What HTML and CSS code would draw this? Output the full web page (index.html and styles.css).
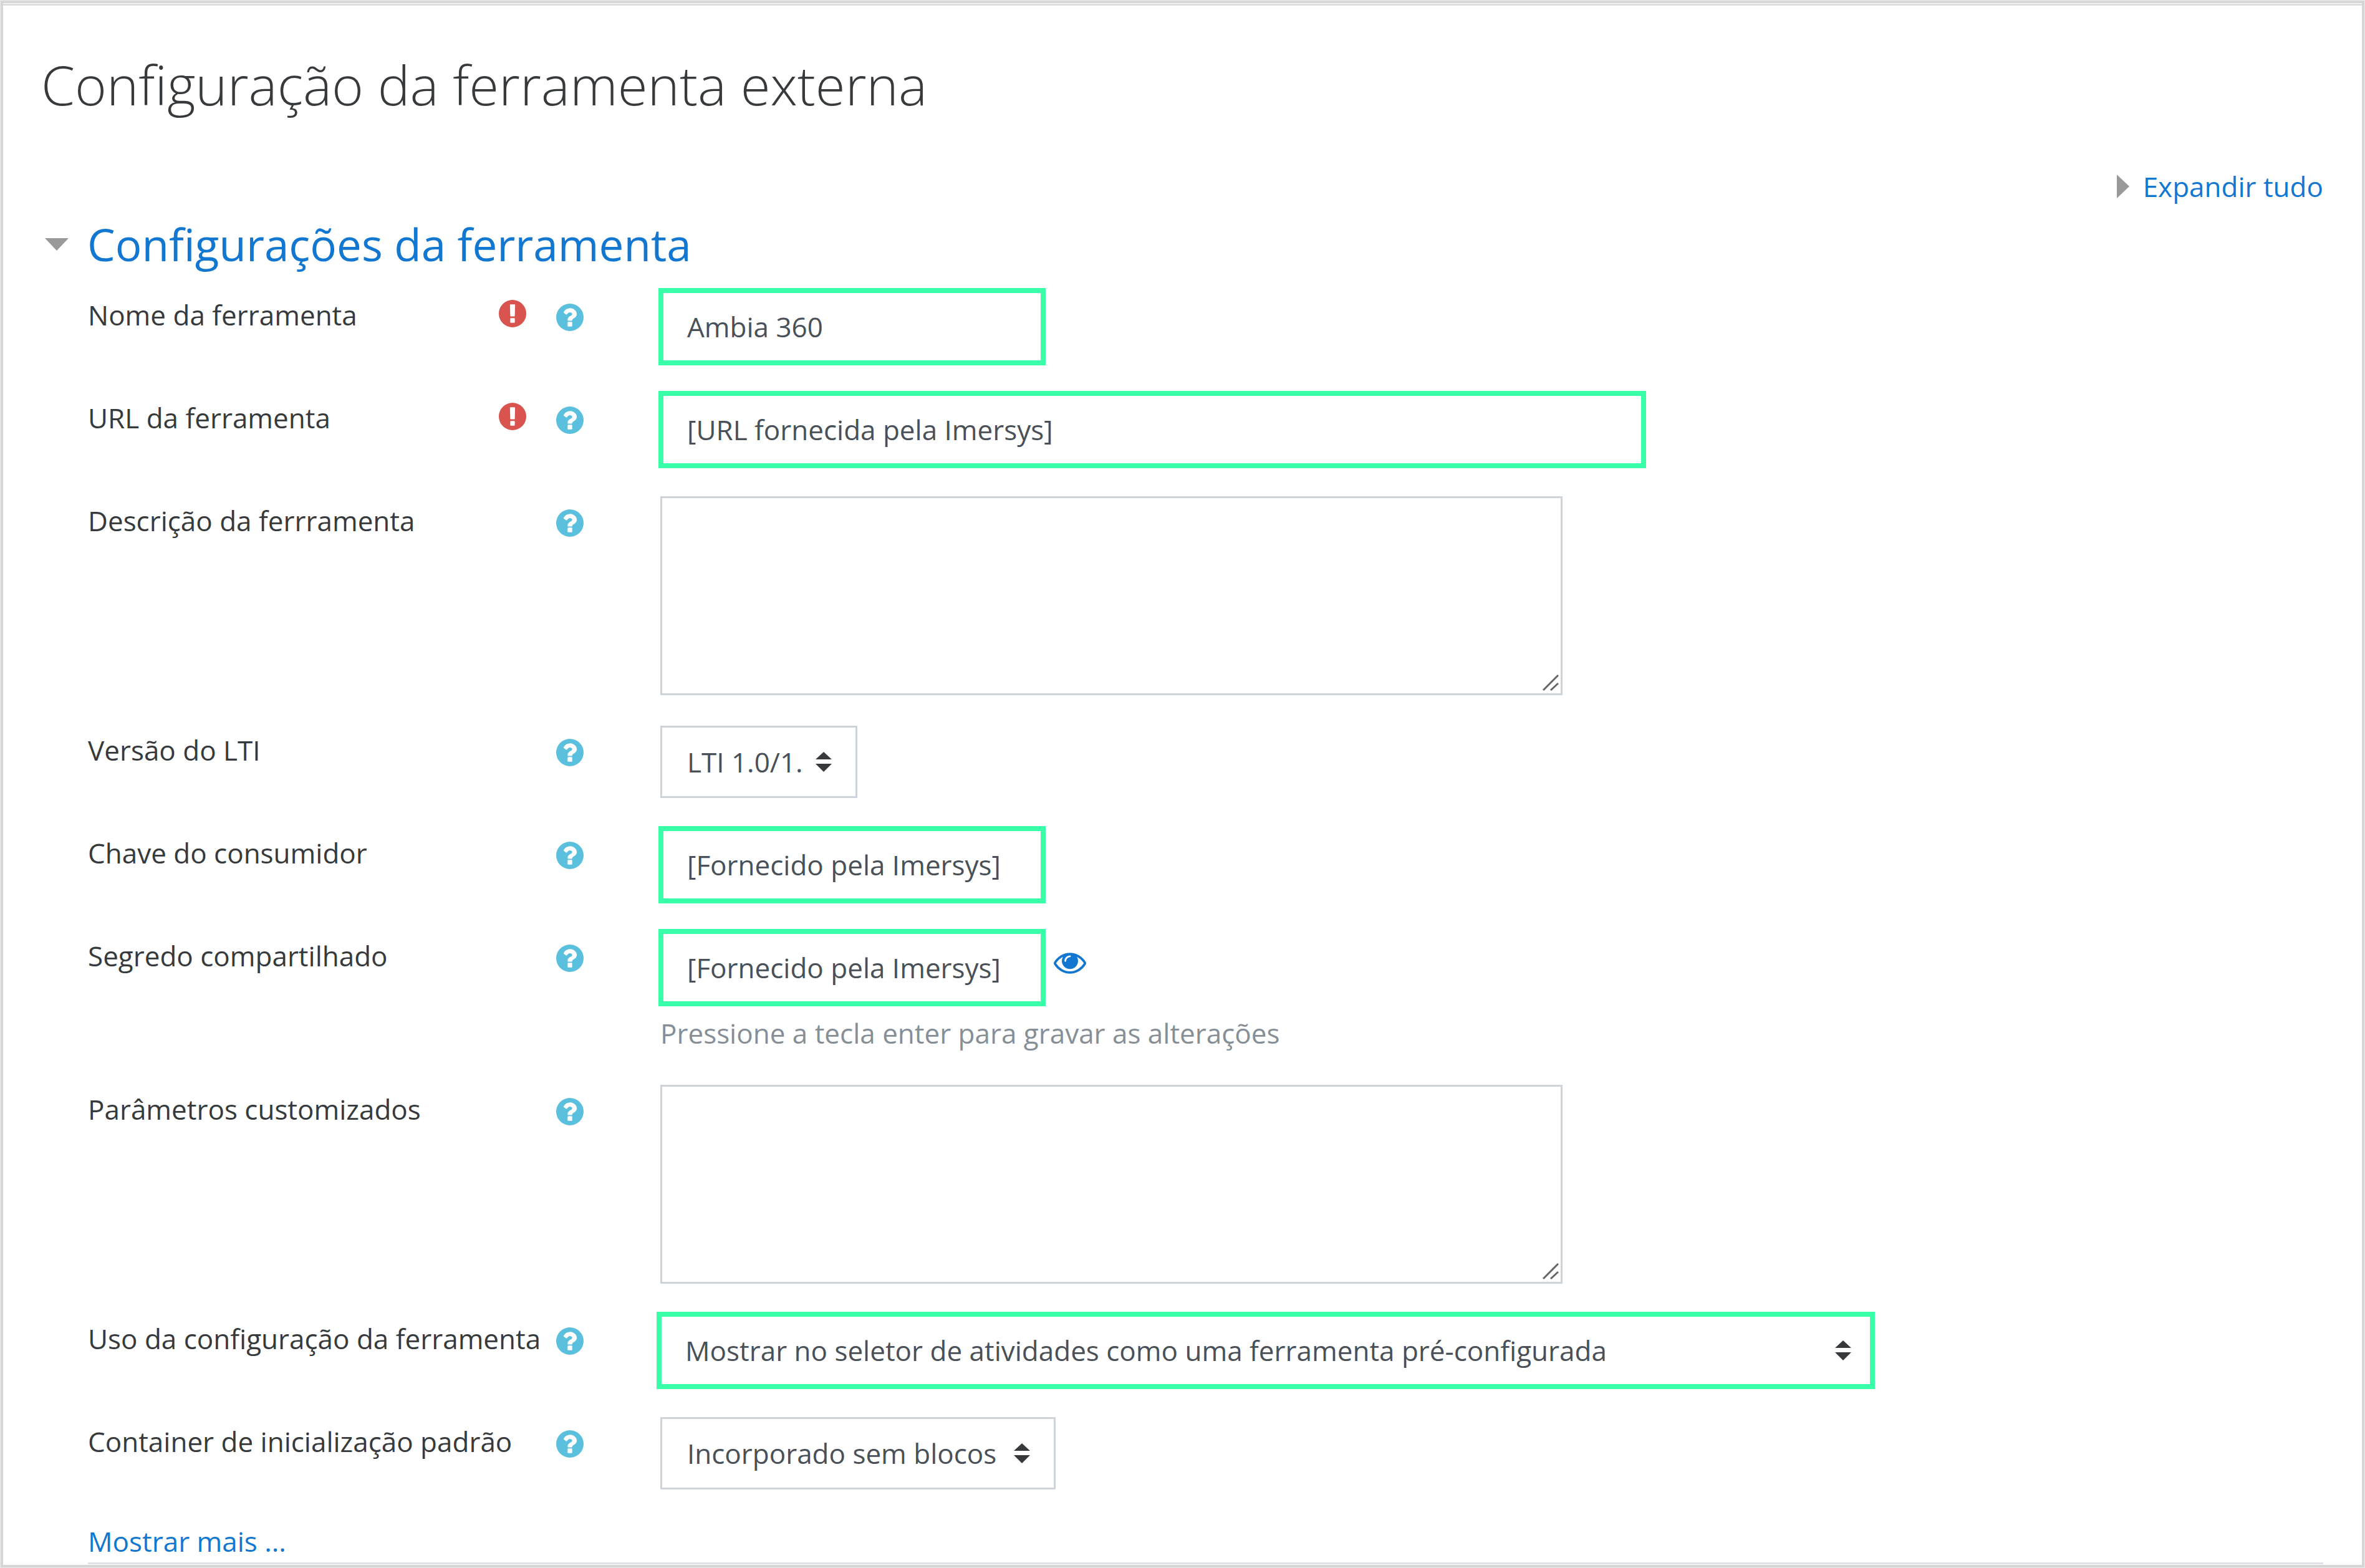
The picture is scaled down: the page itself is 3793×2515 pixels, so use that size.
FILE: index.html
```html
<!DOCTYPE html>
<html lang="pt-BR">
<head>
<meta charset="utf-8">
<title>Configuração da ferramenta externa</title>
<link rel="stylesheet" href="styles.css">
</head>
<body>
<svg class="sprite" aria-hidden="true">
  <symbol id="required" viewBox="0 0 1536 1536"><path fill="currentColor" d="M768 0a768 768 0 1 1 0 1536A768 768 0 0 1 768 0zM896 1247v-190q0-14-9-23.500t-22-9.500h-192q-13 0-23 10t-10 23v190q0 13 10 23t23 10h192q13 0 22-9.500t9-23.500zM894 903l18-621q0-12-10-18-10-8-24-8h-220q-14 0-24 8-10 6-10 18l17 621q0 10 10 17.500t24 7.500h185q14 0 23.500-7.500t10.500-17.500z"/></symbol>
  <symbol id="help" viewBox="0 0 1536 1536"><path fill="currentColor" d="M768 0a768 768 0 1 1 0 1536A768 768 0 0 1 768 0zM896 1248v-192q0-14-9-23t-23-9h-192q-14 0-23 9t-9 23v192q0 14 9 23t23 9h192q14 0 23-9t9-23zM1152 576q0-88-55.500-163t-138.500-116-170-41q-243 0-371 213-15 24 8 42l132 100q7 6 19 6 16 0 25-12 53-68 86-92 34-24 86-24 48 0 85.500 26t37.500 59q0 38-20 61t-68 45q-63 28-115.500 86.500t-52.500 125.500v36q0 14 9 23t23 9h192q14 0 23-9t9-23q0-19 21.500-49.500t54.500-49.500q32-18 49-28.500t46-35 44.500-48 28-60.500 12.500-81z"/></symbol>
  <symbol id="eye" viewBox="0 0 1792 1152"><path fill="currentColor" d="M1664 576q-152-236-381-353 61 104 61 225 0 185-131.500 316.500t-316.500 131.500-316.500-131.500-131.500-316.500q0-121 61-225-229 117-381 353 133 205 333.500 326.500t434.500 121.500 434.500-121.500 333.500-326.500zM944 192q0-20-14-34t-34-14q-125 0-214.500 89.500t-89.500 214.500q0 20 14 34t34 14 34-14 14-34q0-86 61-147t147-61q20 0 34-14t14-34zM1792 576q0 34-20 69-140 230-376.500 368.500t-499.500 138.500-499.500-139-376.500-368q-20-35-20-69t20-69q140-229 376.500-368t499.500-139 499.500 139 376.500 368q20 35 20 69z"/></symbol>
  <symbol id="updown" viewBox="0 0 26 32"><path fill="currentColor" d="M13 0L26 12H0zM0 19H26L13 32z"/></symbol>
  <symbol id="grip" viewBox="0 0 26 26"><path fill="none" stroke="#666" stroke-width="3" d="M1 25L25 1M13 25L25 14"/></symbol>
</svg>
<main class="page">
  <h1 class="title">Configuração da ferramenta externa</h1>
  <div class="toolbar"><a class="expand" href="#ferramenta"><svg class="tri-right" viewBox="0 0 20 38" aria-hidden="true"><path fill="#999" d="M0 0L20 19L0 38z"/></svg>Expandir tudo</a></div>
  <form class="settings" id="ferramenta">
    <h2 class="legend"><svg class="tri-down" viewBox="0 0 38 20" aria-hidden="true"><path fill="#999" d="M0 0H38L19 20z"/></svg><a href="#ferramenta">Configurações da ferramenta</a></h2>
    <div class="rows">
      <div class="row">
        <div class="name"><label for="nome">Nome da ferramenta</label><div class="marks"><svg class="required" role="img" aria-label="Obrigatório"><use href="#required"/></svg><button class="help" type="button" aria-label="Ajuda"><svg><use href="#help"/></svg></button></div></div>
        <div class="control"><input class="field marked short" id="nome" type="text" value="Ambia 360"></div>
      </div>
      <div class="row">
        <div class="name"><label for="url">URL da ferramenta</label><div class="marks"><svg class="required" role="img" aria-label="Obrigatório"><use href="#required"/></svg><button class="help" type="button" aria-label="Ajuda"><svg><use href="#help"/></svg></button></div></div>
        <div class="control"><input class="field marked long" id="url" type="text" value="[URL fornecida pela Imersys]"></div>
      </div>
      <div class="row">
        <div class="name"><label for="descricao">Descrição da ferrramenta</label><div class="marks"><button class="help" type="button" aria-label="Ajuda"><svg><use href="#help"/></svg></button></div></div>
        <div class="control"><div class="stack area"><textarea class="field" id="descricao"></textarea><svg class="grip" aria-hidden="true"><use href="#grip"/></svg></div></div>
      </div>
      <div class="row">
        <div class="name"><label for="versao">Versão do LTI</label><div class="marks"><button class="help" type="button" aria-label="Ajuda"><svg><use href="#help"/></svg></button></div></div>
        <div class="control"><div class="stack version"><select class="field" id="versao"><option>LTI 1.0/1.</option></select><svg class="updown" aria-hidden="true"><use href="#updown"/></svg></div></div>
      </div>
      <div class="row">
        <div class="name"><label for="chave">Chave do consumidor</label><div class="marks"><button class="help" type="button" aria-label="Ajuda"><svg><use href="#help"/></svg></button></div></div>
        <div class="control"><input class="field marked short" id="chave" type="text" value="[Fornecido pela Imersys]"></div>
      </div>
      <div class="row">
        <div class="name"><label for="segredo">Segredo compartilhado</label><div class="marks"><button class="help" type="button" aria-label="Ajuda"><svg><use href="#help"/></svg></button></div></div>
        <div class="control"><input class="field marked short" id="segredo" type="text" value="[Fornecido pela Imersys]"><button class="reveal" type="button" aria-label="Revelar"><svg><use href="#eye"/></svg></button><p class="hint">Pressione a tecla enter para gravar as alterações</p></div>
      </div>
      <div class="row">
        <div class="name"><label for="parametros">Parâmetros customizados</label><div class="marks"><button class="help" type="button" aria-label="Ajuda"><svg><use href="#help"/></svg></button></div></div>
        <div class="control"><div class="stack area"><textarea class="field" id="parametros"></textarea><svg class="grip" aria-hidden="true"><use href="#grip"/></svg></div></div>
      </div>
      <div class="row">
        <div class="name"><label for="uso">Uso da configuração da ferramenta</label><div class="marks"><button class="help" type="button" aria-label="Ajuda"><svg><use href="#help"/></svg></button></div></div>
        <div class="control"><div class="stack usage"><select class="field marked" id="uso"><option>Mostrar no seletor de atividades como uma ferramenta pré-configurada</option></select><svg class="updown" aria-hidden="true"><use href="#updown"/></svg></div></div>
      </div>
      <div class="row">
        <div class="name"><label for="container">Container de inicialização padrão</label><div class="marks"><button class="help" type="button" aria-label="Ajuda"><svg><use href="#help"/></svg></button></div></div>
        <div class="control"><div class="stack launch"><select class="field" id="container"><option>Incorporado sem blocos</option></select><svg class="updown" aria-hidden="true"><use href="#updown"/></svg></div></div>
      </div>
    </div>
    <div class="more"><a href="#ferramenta">Mostrar mais ...</a></div>
  </form>
</main>
</body>
</html>
```

FILE: styles.css
```css
* { box-sizing: border-box; }
body {
  margin: 0;
  padding: 1px;
  background: #ececec;
  color: #373a3c;
  font-family: "Open Sans", "Noto Sans", sans-serif;
  font-size: 44px;
  line-height: 68px;
}
a { color: #1177d1; text-decoration: none; }
button { padding: 0; border: 0; background: none; display: block; cursor: pointer; }
svg { display: block; }
.sprite { width: 0; height: 0; position: absolute; }
.page {
  border: 4px solid #d6d6d6;
  min-height: calc(100vh - 2px);
  padding: 0 62px 0 61px;
  background: #fff linear-gradient(#dedede, #dedede) 0 1px / 100% 3px no-repeat;
}
.title { margin: 0; padding-top: 74px; font-size: 87px; line-height: 112px; font-weight: 300; }
.toolbar { display: flex; justify-content: flex-end; margin-top: 74px; }
.expand { display: flex; align-items: center; gap: 22px; }
.tri-right { width: 20px; height: 38px; }
.legend { display: flex; align-items: center; gap: 30px; margin: 15px 0 0 6px; font-size: 71px; line-height: 88px; font-weight: 400; }
.tri-down { width: 38px; height: 20px; }
.rows { display: grid; gap: 49px; margin-top: 30px; padding-left: 75px; }
.row { display: grid; grid-template-columns: 795px 1fr; column-gap: 123px; min-height: 116px; }
.name { display: flex; justify-content: space-between; align-items: flex-start; padding-top: 5px; white-space: nowrap; }
.marks { display: flex; align-items: flex-start; gap: 48px; }
.required { width: 44px; height: 44px; margin-top: 10px; color: #d9534f; }
.help { margin-top: 16px; color: #5bc0de; }
.help svg { width: 44px; height: 44px; }
.control { display: flex; flex-wrap: wrap; align-items: flex-start; }
.field {
  appearance: none;
  width: 100%;
  height: 116px;
  margin: 0;
  padding: 0 40px;
  border: 3px solid #ced4da;
  border-radius: 0;
  background: #fff;
  color: #495057;
  font: inherit;
}
.marked { height: 124px; margin: -4px 0 -4px -3px; border: 8px solid #38ffa8; padding: 0 38px; }
.short { width: 621px; }
.long { width: 1584px; }
.stack { display: grid; }
.stack > * { grid-area: 1 / 1; }
.area { width: 1447px; }
.area .field { height: 319px; resize: none; }
.grip { width: 26px; height: 26px; place-self: end; margin: 0 6px 7px 0; }
.version { width: 316px; }
.usage { width: 1954px; margin-left: -3px; }
.launch { width: 634px; }
.updown { width: 26px; height: 32px; place-self: center end; margin-right: 41px; pointer-events: none; }
.reveal { margin: 34px 0 0 13px; color: #1177d1; }
.reveal svg { width: 52px; height: 34px; }
.hint { width: 100%; margin: 13px 0 0; color: #868e96; }
.more { margin: 49px 0 0 75px; border-bottom: 3px solid #dee2e6; }
```
